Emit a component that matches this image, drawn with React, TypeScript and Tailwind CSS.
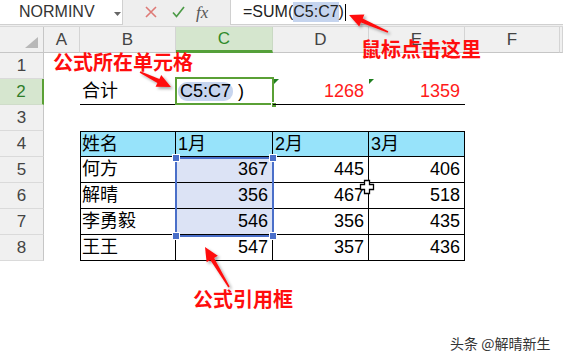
import React from "react";

const COLS = [36, 96, 97, 96, 96, 95, 3];
const LETTERS = ["A", "B", "C", "D", "E", "F", ""];

function arrowPoints(tx: number, ty: number, hx: number, hy: number) {
  const dx = hx - tx;
  const dy = hy - ty;
  const len = Math.sqrt(dx * dx + dy * dy);
  const ux = dx / len;
  const uy = dy / len;
  const nx = -uy;
  const ny = ux;
  const L = 14;
  const bx = hx - ux * L;
  const by = hy - uy * L;
  const pts: [number, number][] = [
    [tx + nx * 0.8, ty + ny * 0.8],
    [bx + nx * 2.2, by + ny * 2.2],
    [bx + nx * 6.5, by + ny * 6.5],
    [hx, hy],
    [bx - nx * 6.5, by - ny * 6.5],
    [bx - nx * 2.2, by - ny * 2.2],
    [tx - nx * 0.8, ty - ny * 0.8],
  ];
  return pts.map((p) => p[0].toFixed(1) + "," + p[1].toFixed(1)).join(" ");
}

type CellProps = {
  w: number;
  className?: string;
  children?: React.ReactNode;
};

function Cell({ w, className = "", children }: CellProps) {
  return (
    <div
      className={"h-full shrink-0 flex items-center relative " + className}
      style={{ width: w }}
    >
      {children}
    </div>
  );
}

function RowHead({ n, active }: { n: number; active?: boolean }) {
  return (
    <div
      className={
        "w-[44px] h-full shrink-0 flex items-center justify-center border-b text-[17px] " +
        (active
          ? "bg-[#d6e6cf] text-[#2f7d2a] border-b-[#cfdcc9] border-r-2 border-r-[#5aa035]"
          : "bg-[#f0f0f0] text-[#444] border-b-[#dadada] border-r border-r-[#c6c6c6]")
      }
    >
      {n}
    </div>
  );
}

const data = [
  ["何方", "367", "445", "406"],
  ["解晴", "356", "467", "518"],
  ["李勇毅", "546", "356", "435"],
  ["王王", "547", "357", "436"],
];

export default function App() {
  return (
    <div className="w-[563px] h-[363px] bg-white relative overflow-hidden font-['Liberation_Sans','Noto_Sans_CJK_SC',sans-serif] text-black">
      {/* Formula bar */}
      <div className="h-[27px] bg-[#eeeeee] flex border-b border-[#d8d8d8]">
        <div className="w-[123px] h-[25px] bg-white border-r border-b border-[#d0d0d0] flex items-center relative">
          <span className="pl-[19px] text-[16px] text-[#333] leading-none">NORMINV</span>
          <svg className="absolute left-[114px] top-[12px]" width="7" height="4" viewBox="0 0 7 4">
            <polygon points="0,0 7,0 3.5,4" fill="#666" />
          </svg>
        </div>
        <div className="w-[107px] flex items-center pl-[22px] pb-[2px]">
          <svg width="12" height="12" viewBox="0 0 12 12">
            <path d="M1 1 L11 11 M11 1 L1 11" stroke="#de7a76" strokeWidth="1.6" fill="none" />
          </svg>
          <svg className="ml-[15px]" width="13" height="12" viewBox="0 0 13 12">
            <path d="M1 6.5 L4.5 10.5 L12 1" stroke="#4c9b47" strokeWidth="1.7" fill="none" />
          </svg>
          <span className="ml-[11px] text-[17px] italic font-['Liberation_Serif',serif] text-[#555] leading-none">fx</span>
        </div>
        <div className="flex-1 h-[25px] bg-white border-l border-b border-[#d0d0d0] flex items-center pl-[12px] text-[16px] text-[#222] leading-none">
          <span>=SUM(</span>
          <span className="bg-[#c5d4ee] py-[2px]">C5:C7</span>
          <span>)</span>
          <span className="inline-block w-px h-[17px] bg-black ml-[1px]" />
        </div>
      </div>

      {/* Column headers */}
      <div className="h-[26px] flex bg-[#f0f0f0] text-[17px] text-[#444]">
        <div className="w-[44px] shrink-0 h-full relative border-r border-b border-[#c6c6c6]">
          <svg className="absolute left-[25px] top-[10px]" width="13" height="11" viewBox="0 0 13 11">
            <polygon points="13,0 13,11 0,11" fill="#b8b8b8" />
          </svg>
        </div>
        {COLS.map((w, i) => (
          <div
            key={i}
            className={
              "h-full shrink-0 flex items-center justify-center " +
              (i === 2
                ? "bg-[#d5e6ce] text-[#2f8a2a] border-b-[3px] border-b-[#55a03a] border-r border-r-[#c9d9c3]"
                : "border-b border-b-[#c6c6c6] border-r border-r-[#d4d4d4]")
            }
            style={{ width: w }}
          >
            {LETTERS[i]}
          </div>
        ))}
      </div>

      {/* Grid body */}
      <div className="text-[18px]">
        {/* Row 1 */}
        <div className="h-[26px] flex">
          <RowHead n={1} />
        </div>
        {/* Row 2 */}
        <div className="h-[26px] flex">
          <RowHead n={2} active />
          <Cell w={COLS[0]} />
          <Cell w={COLS[1]} className="border-b border-black pl-[2px]">合计</Cell>
          <Cell w={COLS[2]} className="border-b border-black pl-[2px]">
            <span className="bg-[#c7d5ee] rounded-[9px] px-[2px] leading-[19px]">C5:C7</span>
            <span className="ml-[5px]">)</span>
            <div className="absolute -left-px -top-[2px] -right-px -bottom-px border-2 border-[#5aa035]" />
            <div className="absolute -right-[4px] -bottom-[4px] w-[6px] h-[6px] bg-[#5aa035] border border-white" />
          </Cell>
          <Cell w={COLS[3]} className="border-b border-black justify-end pr-[5px] text-[#ff1a1a]">
            1268
            <svg className="absolute left-[1px] top-0" width="5" height="5" viewBox="0 0 5 5">
              <polygon points="0,0 5,0 0,5" fill="#1f7f1f" />
            </svg>
          </Cell>
          <Cell w={COLS[4]} className="border-b border-black justify-end pr-[5px] text-[#ff1a1a]">
            1359
            <svg className="absolute left-0 top-0" width="5" height="5" viewBox="0 0 5 5">
              <polygon points="0,0 5,0 0,5" fill="#1f7f1f" />
            </svg>
          </Cell>
        </div>
        {/* Row 3 */}
        <div className="h-[26px] flex">
          <RowHead n={3} />
        </div>
        {/* Row 4 header */}
        <div className="h-[26px] flex">
          <RowHead n={4} />
          <Cell w={COLS[0]} />
          <Cell w={COLS[1]} className="bg-[#97e3fa] border-t border-b border-l border-r border-black pl-px">姓名</Cell>
          <Cell w={COLS[2]} className="bg-[#97e3fa] border-t border-b border-r border-black pl-[2px]">1月</Cell>
          <Cell w={COLS[3]} className="bg-[#97e3fa] border-t border-b border-r border-black pl-[2px]">2月</Cell>
          <Cell w={COLS[4]} className="bg-[#97e3fa] border-t border-b border-r border-black pl-[2px]">3月</Cell>
        </div>
        {data.map((r, i) => (
          <div key={i} className="h-[26px] flex">
            <RowHead n={5 + i} />
            <Cell w={COLS[0]} />
            <Cell w={COLS[1]} className="border-b border-l border-r border-black pl-px">{r[0]}</Cell>
            <Cell
              w={COLS[2]}
              className={"border-b border-r border-black justify-end pr-[4px] " + (i < 3 ? "bg-[#dce3f5]" : "")}
            >
              {r[1]}
            </Cell>
            <Cell w={COLS[3]} className="border-b border-r border-black justify-end pr-[4px]">{r[2]}</Cell>
            <Cell w={COLS[4]} className="border-b border-r border-black justify-end pr-[4px]">{r[3]}</Cell>
          </div>
        ))}
      </div>

      {/* Reference selection box C5:C7 */}
      <div className="absolute left-[175px] top-[157px] w-[99px] h-[80px] border-2 border-[#4a6fc9] pointer-events-none" />
      <div className="absolute left-[172px] top-[154px] w-[8px] h-[8px] bg-[#4a6fc9] border border-white" />
      <div className="absolute left-[269px] top-[154px] w-[8px] h-[8px] bg-[#4a6fc9] border border-white" />
      <div className="absolute left-[172px] top-[232px] w-[8px] h-[8px] bg-[#4a6fc9] border border-white" />
      <div className="absolute left-[269px] top-[232px] w-[8px] h-[8px] bg-[#4a6fc9] border border-white" />

      {/* Cursor */}
      <svg className="absolute left-[359px] top-[179px]" width="16" height="16" viewBox="0 0 16 16">
        <path
          d="M5.5 1.5 H10.5 V5.5 H14.5 V10.5 H10.5 V14.5 H5.5 V10.5 H1.5 V5.5 H5.5 Z"
          fill="white"
          stroke="black"
          strokeWidth="1.3"
        />
      </svg>

      {/* Annotations */}
      <div className="absolute left-[53px] top-[51px] text-[20px] leading-[22px] font-bold text-[#ff0d0d] font-['Noto_Sans_CJK_SC',sans-serif] whitespace-nowrap">
        公式所在单元格
      </div>
      <div className="absolute left-[361px] top-[38px] text-[20px] leading-[22px] font-bold text-[#ff0d0d] font-['Noto_Sans_CJK_SC',sans-serif] whitespace-nowrap">
        鼠标点击这里
      </div>
      <div className="absolute left-[193px] top-[288px] text-[20px] leading-[22px] font-bold text-[#ff0d0d] font-['Noto_Sans_CJK_SC',sans-serif] whitespace-nowrap">
        公式引用框
      </div>

      <svg className="absolute left-0 top-0 pointer-events-none" width="563" height="363" viewBox="0 0 563 363">
        <defs>
          <filter id="sh" x="-50%" y="-50%" width="200%" height="200%">
            <feDropShadow dx="2" dy="2" stdDeviation="1.5" floodColor="#000" floodOpacity="0.35" />
          </filter>
        </defs>
        <polygon points={arrowPoints(388, 32, 349, 15)} fill="#ff1010" filter="url(#sh)" />
        <polygon points={arrowPoints(140, 72, 171, 87)} fill="#ff1010" filter="url(#sh)" />
        <polygon points={arrowPoints(229, 287, 205, 247)} fill="#ff1010" filter="url(#sh)" />
      </svg>

      {/* Watermark */}
      <div className="absolute left-[450px] top-[334px] text-[14px] leading-[18px] text-[#333] font-['Noto_Sans_CJK_SC',sans-serif] whitespace-nowrap">
        头条 @解晴新生
      </div>
    </div>
  );
}
